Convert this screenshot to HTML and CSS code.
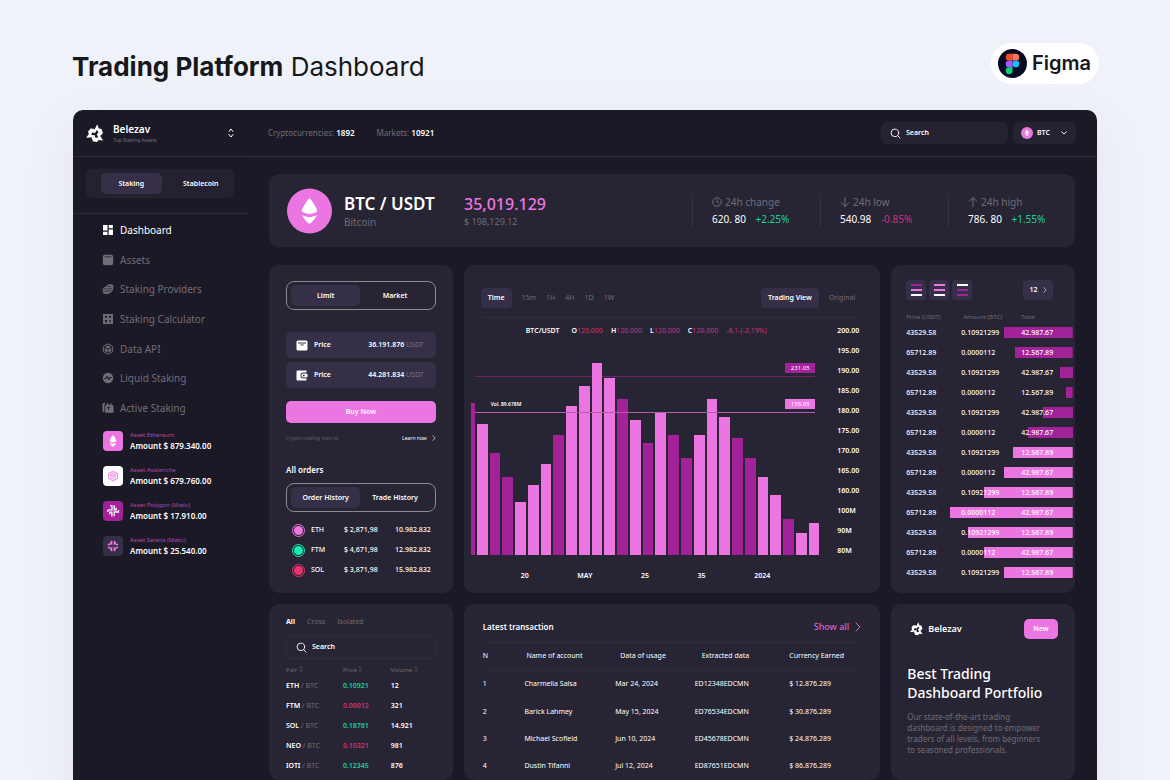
FILE: index.html
```html
<!DOCTYPE html>
<html lang="en">
<head>
<meta charset="utf-8">
<meta name="viewport" content="width=device-width, initial-scale=1">
<title>Trading Platform Dashboard</title>
<link rel="stylesheet" href="styles.css">
</head>
<body>
<svg class="defs" aria-hidden="true">
  <symbol id="logo" viewBox="0 0 56 56">
    <path id="arm" d="M13 18 22 13 25 17 33 1 38 13 46 15 50 27 41 34 37 24 32 18 26 27 20 24 14 27Z"/>
    <use href="#arm" transform="rotate(120 28 30)"/>
    <use href="#arm" transform="rotate(240 28 30)"/>
  </symbol>
  <symbol id="search" viewBox="0 0 12 12"><circle cx="5.300" cy="5.300" r="4.100"/><path d="m8.300 8.300 2.600 2.600"/></symbol>
  <symbol id="right" viewBox="0 0 6 10"><path d="m1 1 4 4-4 4"/></symbol>
  <symbol id="sort" viewBox="0 0 6 10"><path d="m1 3.500 2-2.500 2 2.500M1 6.500 3 9l2-2.500"/></symbol>
  <symbol id="eth" viewBox="0 0 16 26"><path d="M8 0c1.500 0 8 11.500 8 12.800C16 14.500 10 16 8 16s-8-1.500-8-3.200C0 11.500 6.500 0 8 0Z"/><path d="M.5 17.300C3 18.500 6 19.200 8 19.200s5-.7 7.500-1.900C14.500 20 9.500 26 8 26S1.500 20 .5 17.300Z"/></symbol>
</svg>

<header class="page-head">
  <h1><b>Trading Platform</b> Dashboard</h1>
  <div class="figma">
    <svg viewBox="0 0 30 30" aria-hidden="true"><circle cx="15" cy="15" r="15" fill="#080a24"/><path d="M11.500 5H15v7h-3.500a3.500 3.500 0 0 1 0-7Z" fill="#f24e1e"/><path d="M15 5h3.500a3.500 3.500 0 0 1 0 7H15Z" fill="#ff7262"/><path d="M11.500 12H15v7h-3.500a3.500 3.500 0 0 1 0-7Z" fill="#a259ff"/><circle cx="18.500" cy="15.500" r="3.500" fill="#1abcfe"/><path d="M11.500 19H15v3.500a3.500 3.500 0 1 1-3.500-3.500Z" fill="#0acf83"/></svg>
    <span>Figma</span>
  </div>
</header>

<div class="app">
  <aside class="sidebar">
    <div class="brand">
      <svg class="brand-logo"><use href="#logo"/></svg>
      <div><strong>Belezav</strong><small>Top Staking Assets</small></div>
      <button class="bare" aria-label="Switch workspace"><svg class="line sort-lg"><use href="#sort"/></svg></button>
    </div>
    <div class="mode"><div class="mode-track"><button class="on">Staking</button><button>Stablecoin</button></div></div>
    <nav class="nav">
      <a class="current" href="#"><svg viewBox="0 0 12 12"><path d="M1 1h4.500v5.500H1ZM1 7.700h4.500V11H1ZM6.700 1H11v3.300H6.700ZM6.700 5.500H11V11H6.700Z"/></svg>Dashboard</a>
      <a href="#"><svg viewBox="0 0 12 12"><path fill-rule="evenodd" d="M3 .8h6A2.200 2.200 0 0 1 11.200 3v6A2.200 2.200 0 0 1 9 11.200H3A2.200 2.200 0 0 1 .8 9V3A2.200 2.200 0 0 1 3 .8ZM2.500 2.500v.8h7v-.8Z"/></svg>Assets</a>
      <a href="#"><svg viewBox="0 0 12 12"><path d="M4 3.500C4.500 1 10 .3 11.200 2.500c.6 1.500-.2 4.500-1.200 6-1.500 2.500-7 3.300-8.700 1.500C.4 9 .5 6 1.300 4.800Z"/><path d="M1.500 5.200c1.500 1.500 5 1.300 8.800-.2M1.200 7.500c1.800 1.400 5 1.200 8.300-.2M5 3.500h3.500" fill="none" stroke="#1c1926" stroke-width=".7"/></svg>Staking Providers</a>
      <a href="#"><svg viewBox="0 0 12 12"><path fill-rule="evenodd" d="M1 1h10v10H1ZM3 2.800v1.900h2V2.800Zm4 0v1.900h2V2.800ZM3 6.900v2.300h2V6.900Zm4 0v.8h2v-.8Zm0 1.500v.8h2v-.8Z"/></svg>Staking Calculator</a>
      <a href="#"><svg viewBox="0 0 12 12"><path d="m6 .8 4.700 2.600v5.200L6 11.200 1.300 8.600V3.400Z" fill="none" stroke="currentColor"/><path d="m6 2.500 2.900 1.600L6 5.700 3.100 4.100ZM2.800 5l2.700 1.500v3L2.800 8ZM9.200 5v3L6.500 9.500v-3Z"/></svg>Data API</a>
      <a href="#"><svg viewBox="0 0 12 12"><circle cx="6" cy="6" r="5.200"/><path d="M2.500 6.500h1.300L5 4.500l2 3 1.200-2h1.500" fill="none" stroke="#1c1926" stroke-width="1.100"/></svg>Liquid Staking</a>
      <a href="#"><svg viewBox="0 0 12 12"><path d="M.5 3C.5 1.500 1.300.8 2.500.8h1L2.400 3v7.200C1.200 10 .5 9.500.5 8.500Z"/><path fill-rule="evenodd" d="M3.300 3.300h1.500V1.500h2v1.800h1.400V1.500h1.500v1.800h1.800v7.400H3.300ZM5 5v1h1v2h1V6h1V5Z"/></svg>Active Staking</a>
    </nav>
    <ul class="assets">
      <li><svg viewBox="0 0 20 20"><rect width="20" height="20" rx="4" fill="#ec76e1"/><use href="#eth" x="6.500" y="4" width="7" height="12" fill="#fff"/></svg><div><small>Asset Ethereum</small><strong>Amount $ 879.340.00</strong></div></li>
      <li><svg viewBox="0 0 20 20"><rect width="20" height="20" rx="4" fill="#fff"/><path d="m10 5 4.500 2.500v5L10 15l-4.500-2.500v-5ZM5.500 7.500 10 10l4.500-2.500M10 10v5M7.700 6.200l4.500 2.500v5M12.300 6.200 7.800 8.700v5" fill="none" stroke="#ec76e1" stroke-width=".8"/></svg><div><small>Asset Avalanche</small><strong>Amount $ 679.760.00</strong></div></li>
      <li><svg viewBox="0 0 20 20"><rect width="20" height="20" rx="4" fill="#a32299"/><path d="M7.200 4.800H9v4H4.800M11.200 4.200v4.600h2V6.700M15.500 9v2h-4.300v4.200M8.900 15.500v-4.300H6.700v2M4.800 9v2" fill="none" stroke="#fff" stroke-width="1.300"/></svg><div><small>Asset Polygon (Matic)</small><strong>Amount $ 17.910.00</strong></div></li>
      <li><svg viewBox="0 0 20 20"><rect width="20" height="20" rx="4" fill="#353047"/><path d="M8.600 4.800v3L7 6.500M11.400 4.800v3L13 6.500M8.600 15.200v-3L7 13.500M11.400 15.200v-3l1.600 1.300M4.800 8.600h2.700M4.800 11.400h2.700M15.200 8.600h-2.700M15.200 11.400h-2.700" fill="none" stroke="#ec76e1" stroke-width="1.500"/></svg><div><small>Asset Selana (Matic)</small><strong>Amount $ 25.540.00</strong></div></li>
    </ul>
  </aside>

  <div class="content">
    <div class="topbar">
      <span>Cryptocurrencies: <b>1892</b></span>
      <span>Markets: <b>10921</b></span>
      <label class="search top-search"><svg class="line"><use href="#search"/></svg><input type="search" placeholder="Search" aria-label="Search"></label>
      <div class="coin-select"><svg viewBox="0 0 12 12"><circle cx="6" cy="6" r="6" fill="#ec76e1"/><use href="#eth" x="4" y="2.500" width="4" height="7" fill="#fff"/></svg><select aria-label="Currency"><option>BTC</option></select><svg class="line down" viewBox="0 0 6 4"><path d="m.7.8 2.300 2.300L5.300.8"/></svg></div>
    </div>

    <main class="main">
      <section class="card hero">
        <svg class="coin" viewBox="0 0 46 46"><circle cx="23" cy="23" r="23" fill="#ec76e1"/><use href="#eth" x="15" y="10" width="16" height="26" fill="#fff"/></svg>
        <div class="pair"><h2>BTC / USDT</h2><p>Bitcoin</p></div>
        <div class="rate"><h2>35,019.129</h2><p>$ 198,129.12</p></div>
        <dl class="stats">
          <div><dt><svg class="line" viewBox="0 0 10 10"><circle cx="5" cy="5" r="4.300"/><path d="M5 2.500V5l1.800 1"/></svg>24h change</dt><dd>620. 80 <span class="up">+2.25%</span></dd></div>
          <div><dt><svg class="line" viewBox="0 0 10 10"><path d="M5 .5v8.800M1.200 5.700 5 9.300l3.800-3.600"/></svg>24h low</dt><dd>540.98 <span class="down-value">-0.85%</span></dd></div>
          <div><dt><svg class="line" viewBox="0 0 10 10"><path d="M5 9.500V.7M1.200 4.300 5 .7l3.800 3.600"/></svg>24h high</dt><dd>786. 80 <span class="up">+1.55%</span></dd></div>
        </dl>
      </section>

      <section class="card trade">
        <div class="switch"><button class="on">Limit</button><button>Market</button></div>
        <div class="fields">
          <div class="field"><svg viewBox="0 0 12 11"><path fill-rule="evenodd" d="M2 .5h8A1.500 1.500 0 0 1 11.500 2v7A1.500 1.500 0 0 1 10 10.500H2A1.500 1.500 0 0 1 .5 9V2A1.500 1.500 0 0 1 2 .5ZM2 2.500v.9h8v-.9Zm2 2c.4 1.300 3.600 1.300 4 0Z" fill="#fff"/></svg><span>Price</span><output>36.191.876 <i>USDT</i></output></div>
          <div class="field"><svg viewBox="0 0 12 11"><path d="M1.500.5h9v2H7.500a3 3 0 0 0 0 6h3v2h-9a1 1 0 0 1-1-1v-8a1 1 0 0 1 1-1Z" fill="#fff"/><rect x="5.500" y="3.500" width="6.200" height="4" rx="1.800" fill="#fff"/><circle cx="7.800" cy="5.500" r=".9" fill="#353047"/></svg><span>Price</span><output>44.281.834 <i>USDT</i></output></div>
        </div>
        <button class="primary buy">Buy Now</button>
        <div class="tutorial"><span>Crypto trading tutorial</span><a href="#">Learn now <svg class="line"><use href="#right"/></svg></a></div>
        <h3>All orders</h3>
        <div class="switch"><button class="on">Order History</button><button>Trade History</button></div>
        <table class="orders">
          <tr><td><span class="dot pink"></span></td><th>ETH</th><td>$ 2,871,98</td><td>10.982.832</td></tr>
          <tr><td><span class="dot green"></span></td><th>FTM</th><td>$ 4,671,98</td><td>12.982.832</td></tr>
          <tr><td><span class="dot red"></span></td><th>SOL</th><td>$ 3,871,98</td><td>15.982.832</td></tr>
        </table>
      </section>

      <section class="card chart">
        <div class="chart-head">
          <button class="chip">Time</button><button>15m</button><button>1H</button><button>4H</button><button>1D</button><button>1W</button>
          <button class="chip push">Trading View</button><button class="original">Original</button>
        </div>
        <div class="chart-body">
          <div class="plot">
            <div class="legend"><b>BTC/USDT</b><span><b>O</b>120.000</span><span><b>H</b>120.000</span><span><b>L</b>120.000</span><span><b>C</b>120.000</span><span>-8.1-(-2.19%)</span></div>
            <div class="bars">
              <i class="p cut" style="height:71%"></i>
              <i style="height:61%"></i><i class="p" style="height:47.500%"></i><i class="p" style="height:36.500%"></i><i style="height:25%"></i><i style="height:32.500%"></i><i style="height:42.500%"></i><i class="p" style="height:56%"></i><i style="height:69.500%"></i><i style="height:79%"></i><i style="height:89.500%"></i><i style="height:82.500%"></i><i class="p" style="height:73%"></i><i style="height:63%"></i><i class="p" style="height:52.500%"></i><i style="height:67%"></i><i class="p" style="height:56%"></i><i class="p" style="height:45.500%"></i><i style="height:56%"></i><i style="height:73%"></i><i style="height:64.500%"></i><i class="p" style="height:54.500%"></i><i class="p" style="height:45.500%"></i><i style="height:36.500%"></i><i style="height:28%"></i><i class="p" style="height:17%"></i><i style="height:10.500%"></i><i style="height:15%"></i>
              <div class="level high"><span>231.05</span></div>
              <div class="level low"><em>Vol. 89.678M</em><span>155.05</span></div>
            </div>
            <div class="dates"><span>20</span><span>MAY</span><span>25</span><span>35</span><span>2024</span></div>
          </div>
          <div class="scale"><span>200.00</span><span>195.00</span><span>190.00</span><span>185.00</span><span>180.00</span><span>175.00</span><span>170.00</span><span>165.00</span><span>160.00</span><span>100M</span><span>90M</span><span>80M</span></div>
        </div>
      </section>

      <section class="card book">
        <div class="book-head">
          <button aria-label="All orders"><i class="a"></i><i class="b"></i><i class="w"></i></button>
          <button aria-label="Buy orders"><i class="b"></i><i class="b"></i><i class="w"></i></button>
          <button aria-label="Sell orders"><i class="w"></i><i class="a"></i><i class="a"></i></button>
          <button class="count">12 <svg class="line"><use href="#right"/></svg></button>
        </div>
        <table>
          <thead><tr><th>Price (USDT)</th><th>Amount (BTC)</th><th>Total</th></tr></thead>
          <tbody>
            <tr class="sell" style="--depth:41.500%"><td>43529.58</td><td>0.10921299</td><td>42.987.67</td></tr>
            <tr class="sell" style="--depth:34.500%"><td>65712.89</td><td>0.0000112</td><td>12.567.89</td></tr>
            <tr class="sell" style="--depth:8%"><td>43529.58</td><td>0.10921299</td><td>42.987.67</td></tr>
            <tr class="sell" style="--depth:4%"><td>65712.89</td><td>0.0000112</td><td>12.567.89</td></tr>
            <tr class="sell" style="--depth:18%"><td>43529.58</td><td>0.10921299</td><td>42.987.67</td></tr>
            <tr class="sell" style="--depth:27%"><td>65712.89</td><td>0.0000112</td><td>42.987.67</td></tr>
            <tr class="bid" style="--depth:36%"><td>43529.58</td><td>0.10921299</td><td>12.567.89</td></tr>
            <tr class="bid" style="--depth:41.500%"><td>65712.89</td><td>0.0000112</td><td>42.987.67</td></tr>
            <tr class="bid" style="--depth:53.500%"><td>43529.58</td><td>0.10921299</td><td>12.567.89</td></tr>
            <tr class="bid" style="--depth:73.500%"><td>65712.89</td><td>0.0000112</td><td>42.987.67</td></tr>
            <tr class="bid" style="--depth:63%"><td>43529.58</td><td>0.10921299</td><td>12.567.89</td></tr>
            <tr class="bid" style="--depth:53.500%"><td>65712.89</td><td>0.0000112</td><td>42.987.67</td></tr>
            <tr class="bid" style="--depth:41.500%"><td>43529.58</td><td>0.10921299</td><td>12.567.89</td></tr>
          </tbody>
        </table>
      </section>

      <section class="card pairs">
        <div class="tabs"><button class="on">All</button><button>Cross</button><button>Isolated</button></div>
        <label class="search"><svg class="line"><use href="#search"/></svg><input type="search" placeholder="Search" aria-label="Search pairs"></label>
        <table>
          <thead><tr><th>Pair <svg class="line"><use href="#sort"/></svg></th><th>Price <svg class="line"><use href="#sort"/></svg></th><th>Volume <svg class="line"><use href="#sort"/></svg></th></tr></thead>
          <tbody>
            <tr><td>ETH <i>/ BTC</i></td><td class="up">0.10921</td><td>12</td></tr>
            <tr><td>FTM <i>/ BTC</i></td><td class="down-value">0.00012</td><td>321</td></tr>
            <tr><td>SOL <i>/ BTC</i></td><td class="up">0.18761</td><td>14.921</td></tr>
            <tr><td>NEO <i>/ BTC</i></td><td class="down-value">0.10321</td><td>981</td></tr>
            <tr><td>IOTI <i>/ BTC</i></td><td class="up">0.12345</td><td>876</td></tr>
          </tbody>
        </table>
      </section>

      <section class="card latest">
        <div class="latest-head"><h3>Latest transaction</h3><a href="#">Show all <svg class="line"><use href="#right"/></svg></a></div>
        <table>
          <thead><tr><th>N</th><th>Name of account</th><th>Data of usage</th><th>Extracted data</th><th>Currency Earned</th></tr></thead>
          <tbody>
            <tr><td>1</td><td>Charmella Salsa</td><td>Mar 24, 2024</td><td>ED12348EDCMN</td><td>$ 12.876.289</td></tr>
            <tr><td>2</td><td>Barick Lahmey</td><td>May 15, 2024</td><td>ED76534EDCMN</td><td>$ 30.876.289</td></tr>
            <tr><td>3</td><td>Michael Scofield</td><td>Jun 10, 2024</td><td>ED45678EDCMN</td><td>$ 24.876.289</td></tr>
            <tr><td>4</td><td>Dustin Tifanni</td><td>Jul 12, 2024</td><td>ED87651EDCMN</td><td>$ 86.876.289</td></tr>
          </tbody>
        </table>
      </section>

      <section class="card promo">
        <div class="promo-head"><svg><use href="#logo"/></svg><strong>Belezav</strong><button class="primary">New</button></div>
        <h2>Best Trading<br>Dashboard Portfolio</h2>
        <p>Our state-of-the-art trading<br>dashboard is designed to empower<br>traders of all levels, from beginners<br>to seasoned professionals.</p>
      </section>
    </main>
  </div>
</div>
</body>
</html>
```
FILE: styles.css
```css
:root {
  --ink: #1c1926;
  --card: #272434;
  --raised: #353047;
  --muted: #706d76;
  --line: #2d2a39;
  --pink: #ec76e1;
  --purple: #a32299;
  --green: #1fcf9b;
  --red: #c9337a;
}

* { box-sizing: border-box; margin: 0; padding: 0; }

body {
  display: flex;
  flex-direction: column;
  height: 100vh;
  overflow: hidden;
  background: #f0f2f9;
  color: #fff;
  font: 7px/12px "Noto Sans", "Open Sans", sans-serif;
}

button, input, select { border: 0; background: none; color: inherit; font: inherit; outline: 0; }
button { cursor: pointer; }
a { color: inherit; text-decoration: none; }
i, em { font-style: normal; }
ul { list-style: none; }
table { border-collapse: collapse; table-layout: fixed; width: 100%; }
th, td { text-align: left; font-weight: 500; white-space: nowrap; }
svg { flex: none; fill: currentColor; }
.line { fill: none; stroke: currentColor; stroke-linecap: round; stroke-linejoin: round; }
.defs { position: absolute; width: 0; height: 0; }
.up { color: var(--green); }
.down-value { color: var(--red); }

.page-head {
  display: flex;
  flex: none;
  align-items: center;
  justify-content: space-between;
  height: 110px;
  padding: 16px 71px 0 72px;
  color: #17181c;
}
.page-head h1 { padding-top: 8px; font: 400 26px/40px Inter, sans-serif; }
.page-head b { font-weight: 700; }
.figma {
  display: flex;
  align-items: center;
  gap: 5px;
  height: 41px;
  margin-bottom: 16px;
  margin-top: 16px;
  padding: 0 8px 0 7px;
  border-radius: 21px;
  background: #fff;
  font: 600 20px/40px Inter, sans-serif;
}
.figma svg { width: 29px; height: 29px; }

.app {
  display: flex;
  flex: 1;
  min-height: 0;
  margin: 0 73px;
  overflow: hidden;
  border-radius: 10px 10px 0 0;
  background: var(--ink);
  box-shadow: 0 20px 50px #c9cde055;
}

.sidebar { flex: 0 0 175px; }
.brand {
  display: flex;
  align-items: center;
  gap: 8px;
  height: 47px;
  padding: 0 14px 0 13px;
  border-bottom: 1px solid var(--line);
}
.brand-logo { width: 19px; height: 19px; }
.brand strong { display: block; font-size: 10px; font-weight: 600; line-height: 13px; }
.brand small { display: block; color: var(--muted); font-size: 5px; line-height: 8px; }
.bare { margin-left: auto; line-height: 0; }
.sort-lg { width: 6px; height: 10px; }
.mode { padding: 12px 14px 15px 13px; border-bottom: 1px solid var(--line); }
.mode-track {
  display: flex;
  gap: 9px;
  padding: 4px 3px 4px 15px;
  border-radius: 7px;
  background: #242130;
}
.mode button { flex: 1; height: 21px; border-radius: 5px; font-size: 7px; font-weight: 600; }
.mode .on { background: var(--raised); }
.nav { display: flex; flex-direction: column; height: 209px; padding: 1px 0 0 29px; }
.nav a { display: flex; flex: 1; align-items: center; gap: 6px; color: var(--muted); font-size: 10px; }
.nav svg { width: 12px; height: 12px; }
.nav .current { color: #fff; }
.assets { padding: 0 0 0 30px; }
.assets li { display: flex; align-items: center; gap: 7px; height: 35px; }
.assets svg { width: 20px; height: 20px; }
.assets small { display: block; color: #b048ac; font-size: 6px; line-height: 9px; }
.assets strong { display: block; font-size: 8px; font-weight: 600; line-height: 11px; }

.content { display: flex; flex: 1; flex-direction: column; min-width: 0; }
.topbar {
  display: flex;
  flex: none;
  align-items: center;
  height: 47px;
  padding: 0 21px 0 20px;
  border-bottom: 1px solid #34313f;
  color: var(--muted);
  font-size: 8px;
}
.topbar span { margin-right: 22px; }
.topbar b { color: #fff; font-weight: 600; }
.search { display: flex; align-items: center; gap: 5px; color: #fff; }
.search svg { width: 11px; height: 11px; }
.search input { flex: 1; min-width: 0; font-size: 7px; font-weight: 600; appearance: none; }
.search input::placeholder { color: #fff; opacity: 1; }
.top-search { width: 127px; height: 22px; margin-left: auto; padding: 0 9px; border-radius: 6px; background: #252231; }
.coin-select { display: flex; align-items: center; gap: 4px; width: 63px; height: 22px; margin-left: 5px; padding: 0 9px 0 8px; border-radius: 6px; background: #252231; color: #fff; }
.coin-select svg { width: 12px; height: 12px; }
.coin-select .down { width: 6px; height: 4px; }
.coin-select select { flex: 1; min-width: 0; appearance: none; color: #fff; font-size: 7px; font-weight: 600; }

.main {
  display: grid;
  flex: 1;
  grid-template-columns: 184fr 417fr 184fr;
  grid-template-rows: auto auto 1fr;
  gap: 11px;
  min-height: 0;
  padding: 17px 22px 0 21px;
}
.card { min-width: 0; border-radius: 10px; background: var(--card); }

.hero { display: flex; grid-column: 1 / -1; align-items: center; height: 73px; margin-bottom: 7px; padding: 0 0 0 18px; }
.coin { width: 45px; height: 46px; }
.pair { width: 120px; margin-left: 12px; }
.hero h2 { font-size: 17px; font-weight: 600; line-height: 22px; white-space: nowrap; }
.hero p { color: var(--muted); font-size: 10px; line-height: 14px; }
.hero .rate h2 { color: var(--pink); font-size: 16px; font-weight: 500; }
.rate p { font-size: 9px; }
.stats { display: flex; margin-left: auto; }
.stats div { width: 128px; padding-left: 19px; border-left: 1px solid #35323f; }
.stats div:last-child { width: 127px; }
.stats dt { display: flex; align-items: center; gap: 3px; color: var(--muted); font-size: 10px; line-height: 16px; }
.stats svg { width: 10px; height: 10px; }
.stats dd { font-size: 10px; line-height: 18px; white-space: nowrap; }
.stats dd span { margin-left: 7px; }

.trade { padding: 16px 17px 10px; }
.switch { display: flex; height: 29px; padding: 3px 5px 3px 4px; border: 1px solid #8c8993; border-radius: 8px; }
.switch button { flex: 1; border-radius: 5px; font-weight: 600; }
.switch .on { background: var(--raised); }
.fields { display: grid; gap: 4px; margin: 22px 0 13px; }
.field { display: flex; align-items: center; gap: 6px; height: 26px; padding: 0 12px 0 10px; border-radius: 5px; background: var(--raised); font-weight: 600; }
.field svg { width: 12px; height: 11px; }
.field output { margin-left: auto; }
.field i { color: #77737f; font-weight: 400; }
.primary { border-radius: 5px; background: var(--pink); font-weight: 600; }
.buy { display: block; width: 100%; height: 22px; }
.tutorial { display: flex; align-items: center; justify-content: space-between; height: 20px; margin-top: 5px; color: #605d68; font-size: 5px; }
.tutorial a { display: flex; align-items: center; gap: 5px; color: #fff; }
.tutorial svg { width: 4px; height: 6px; }
h3 { font-size: 8px; font-weight: 600; }
.trade h3 { margin: 12px 0 3px; line-height: 20px; }
.orders { margin-top: 8px; }
.orders td, .orders th { height: 20px; }
.orders td:first-child { width: 25px; padding-left: 6px; }
.orders th { width: 33px; }
.orders td:nth-child(3) { width: 51px; }
.dot { display: block; width: 13px; height: 13px; border: 1px solid; border-radius: 50%; padding: 1px; }
.dot::before { display: block; height: 9px; border-radius: 50%; background: currentColor; content: ""; }
.dot.pink { color: var(--pink); }
.dot.green { color: #14eeae; }
.dot.red { color: #f0316f; }

.chart { position: relative; z-index: 0; padding: 23px 0 7px 7px; }
.chart-head { display: flex; align-items: center; margin: 0 24px 3px 10px; padding-bottom: 9px; border-bottom: 1px solid #302d3b; color: var(--muted); }
.chart-head button { margin-right: 10px; }
.chart-head .chip { height: 20px; padding: 0 7px; border-radius: 4px; background: var(--raised); color: #fff; font-weight: 600; }
.chart-head .push { margin-left: auto; }
.chart-head .original { margin-right: 1px; }
.chart-body { display: flex; gap: 18px; }
.plot { flex: 1; min-width: 0; }
.legend { display: flex; gap: 8px; height: 20px; padding-left: 55px; color: var(--red); line-height: 20px; white-space: nowrap; }
.legend > b { margin-right: 4px; }
.legend b { color: #fff; font-weight: 600; }
.bars { position: relative; display: flex; align-items: flex-end; gap: 2px; height: 214px; }
.bars > i { flex: 1; background: var(--pink); }
.bars > .p { background: var(--purple); }
.bars > .cut { flex: 0 0 4px; }
.level { position: absolute; right: 4px; left: 4px; display: flex; align-items: center; justify-content: flex-end; height: 14px; padding-bottom: 4px; border-bottom: 1px solid #722070; font-size: 6px; line-height: 10px; }
.level span { width: 30px; background: var(--purple); text-align: center; }
.level em { margin: 0 auto 0 16px; font-size: 5px; font-weight: 600; }
.level.high { top: 22px; z-index: -1; }
.level.low { top: 58px; border-color: #b758af; }
.level.low span { background: var(--pink); }
.dates { display: flex; justify-content: space-between; padding: 11px 49px 0 50px; font-weight: 600; line-height: 20px; }
.scale { display: grid; flex: 0 0 43px; align-content: start; font-weight: 600; line-height: 20px; }

.book { padding: 15px 2px 10px 15px; }
.book-head { display: flex; gap: 3px; margin-bottom: 11px; padding-right: 20px; }
.book-head button { display: grid; align-content: center; justify-items: center; gap: 3px; width: 20px; height: 20px; border-radius: 4px; background: var(--raised); }
.book-head i { width: 11px; height: 2px; }
.book-head .a { background: var(--purple); }
.book-head .b { background: var(--pink); }
.book-head .w { background: #fff; }
.book-head .count { display: flex; align-items: center; justify-content: center; gap: 5px; width: 30px; margin-left: auto; font-weight: 600; }
.count svg { width: 4px; height: 6px; }
.book th { width: 33%; height: 12px; color: var(--muted); font-size: 6px; font-weight: 400; line-height: 12px; }
.book th:nth-child(2) { width: 36%; padding-left: 2px; }
.book th:last-child { width: 31%; }
.book td { height: 20px; font-weight: 500; }
.book tbody tr { background: linear-gradient(var(--bar), var(--bar)) right 4px / var(--depth) 11px no-repeat; }
.sell { --bar: var(--purple); }
.bid { --bar: var(--pink); }

.pairs { padding: 12px 17px 0; }
.tabs { display: flex; gap: 12px; height: 12px; margin-bottom: 7px; color: var(--muted); }
.tabs .on { color: #fff; font-weight: 700; }
.pairs .search { height: 24px; padding: 0 9px; border: 1px solid #302d3b; border-radius: 4px; }
.pairs th { width: 38%; height: 17px; padding-top: 4px; color: var(--muted); font-size: 6px; font-weight: 400; }
.pairs th:nth-child(2) { width: 32%; }
.pairs th:last-child { width: 30%; }
.pairs th svg { width: 4px; height: 6px; }
.pairs td { height: 20px; font-weight: 600; }
.pairs i { color: var(--muted); font-weight: 400; }

.latest { padding: 16px 19px 0; }
.latest-head { display: flex; align-items: center; justify-content: space-between; height: 23px; padding-bottom: 8px; border-bottom: 1px solid #302d3b; }
.latest-head a { display: flex; align-items: center; gap: 6px; color: #d963d0; font-size: 9px; font-weight: 500; }
.latest-head svg { width: 6px; height: 10px; }
.latest th { height: 27px; border-bottom: 1px solid #302d3b; font-weight: 400; }
.latest td { height: 27px; font-weight: 400; }
.latest tr:first-child td { height: 28px; }
.latest th:nth-child(1) { width: 11%; }
.latest th:nth-child(2) { width: 24%; padding-left: 2px; }
.latest th:nth-child(3) { width: 21%; padding-left: 5px; }
.latest th:nth-child(4) { width: 25%; padding-left: 7px; }

.promo { padding: 15px 14px 0 16px; }
.promo-head { display: flex; align-items: center; gap: 4px; padding: 0 3px; }
.promo-head svg { width: 14px; height: 14px; }
.promo-head strong { font-size: 9px; font-weight: 600; }
.promo-head button { width: 34px; height: 20px; margin-left: auto; }
.promo h2 { margin: 25px 0 9px; font-size: 14px; font-weight: 500; line-height: 19px; white-space: nowrap; }
.promo p { color: var(--muted); font-size: 8px; line-height: 11px; white-space: nowrap; }
```
